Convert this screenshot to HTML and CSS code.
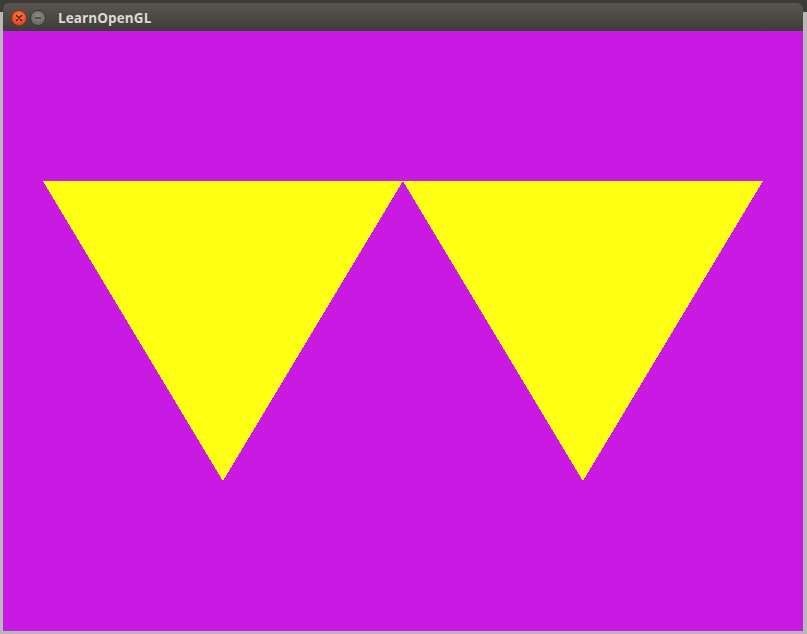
FILE: index.html
```html
<!DOCTYPE html>
<html>
<head>
<meta charset="utf-8">
<link rel="stylesheet" href="styles.css">
</head>
<body>
<div class="desktop">
  <div class="window">
    <div class="titlebar">
      <div class="buttons">
        <span class="btn close">
          <svg width="8" height="8" viewBox="0 0 8 8"><path d="M1.5 1.5 L6.5 6.5 M6.5 1.5 L1.5 6.5" stroke="#4a1a08" stroke-width="1.3" stroke-linecap="round"/></svg>
        </span>
        <span class="btn min">
          <svg width="8" height="8" viewBox="0 0 8 8"><path d="M1 4 H7" stroke="#3a3935" stroke-width="1.3"/></svg>
        </span>
      </div>
      <span class="title">LearnOpenGL</span>
    </div>
    <div class="canvas">
      <svg class="gl" width="800" height="600" viewBox="0 0 800 600" shape-rendering="crispEdges">
        <polygon points="40,150 400,150 220,450" fill="#ffff14"/>
        <polygon points="400,150 760,150 580,450" fill="#ffff14"/>
      </svg>
    </div>
  </div>
</div>
</body>
</html>
```
FILE: styles.css
```css
html, body {
  margin: 0;
  padding: 0;
  width: 807px;
  height: 634px;
  overflow: hidden;
  background: #b8b8b6;
}
.desktop {
  padding: 3px 4px 3px 3px;
  background: linear-gradient(to bottom, #3c3b37 0, #3c3b37 12px, #b8b8b6 12px);
  height: 628px;
}
.window {
  width: 800px;
  display: flex;
  flex-direction: column;
}
.titlebar {
  height: 28px;
  background: linear-gradient(to bottom, #5a5750 0%, #4a4843 55%, #3d3c38 100%);
  border-radius: 6px 6px 0 0;
  display: flex;
  align-items: center;
  box-sizing: border-box;
  padding-left: 8px;
  padding-top: 1px;
}
.buttons {
  display: flex;
  gap: 3px;
}
.btn {
  width: 16px;
  height: 16px;
  border-radius: 50%;
  display: flex;
  align-items: center;
  justify-content: center;
  box-sizing: border-box;
}
.close {
  background: radial-gradient(circle at 50% 35%, #f47a4a 0%, #e8542a 60%, #c9421c 100%);
  border: 1px solid #8a3417;
}
.min {
  background: radial-gradient(circle at 50% 35%, #8d8a83 0%, #6f6c66 70%, #5d5b56 100%);
  border: 1px solid #3a3935;
}
.title {
  margin-left: 12px;
  font-family: "Open Sans", "DejaVu Sans", sans-serif;
  font-weight: 700;
  font-size: 13.5px;
  color: #dfdbd2;
  letter-spacing: 0.1px;
}
.canvas {
  width: 800px;
  height: 600px;
  background: #c91ae3;
}
.gl {
  display: block;
}
```
